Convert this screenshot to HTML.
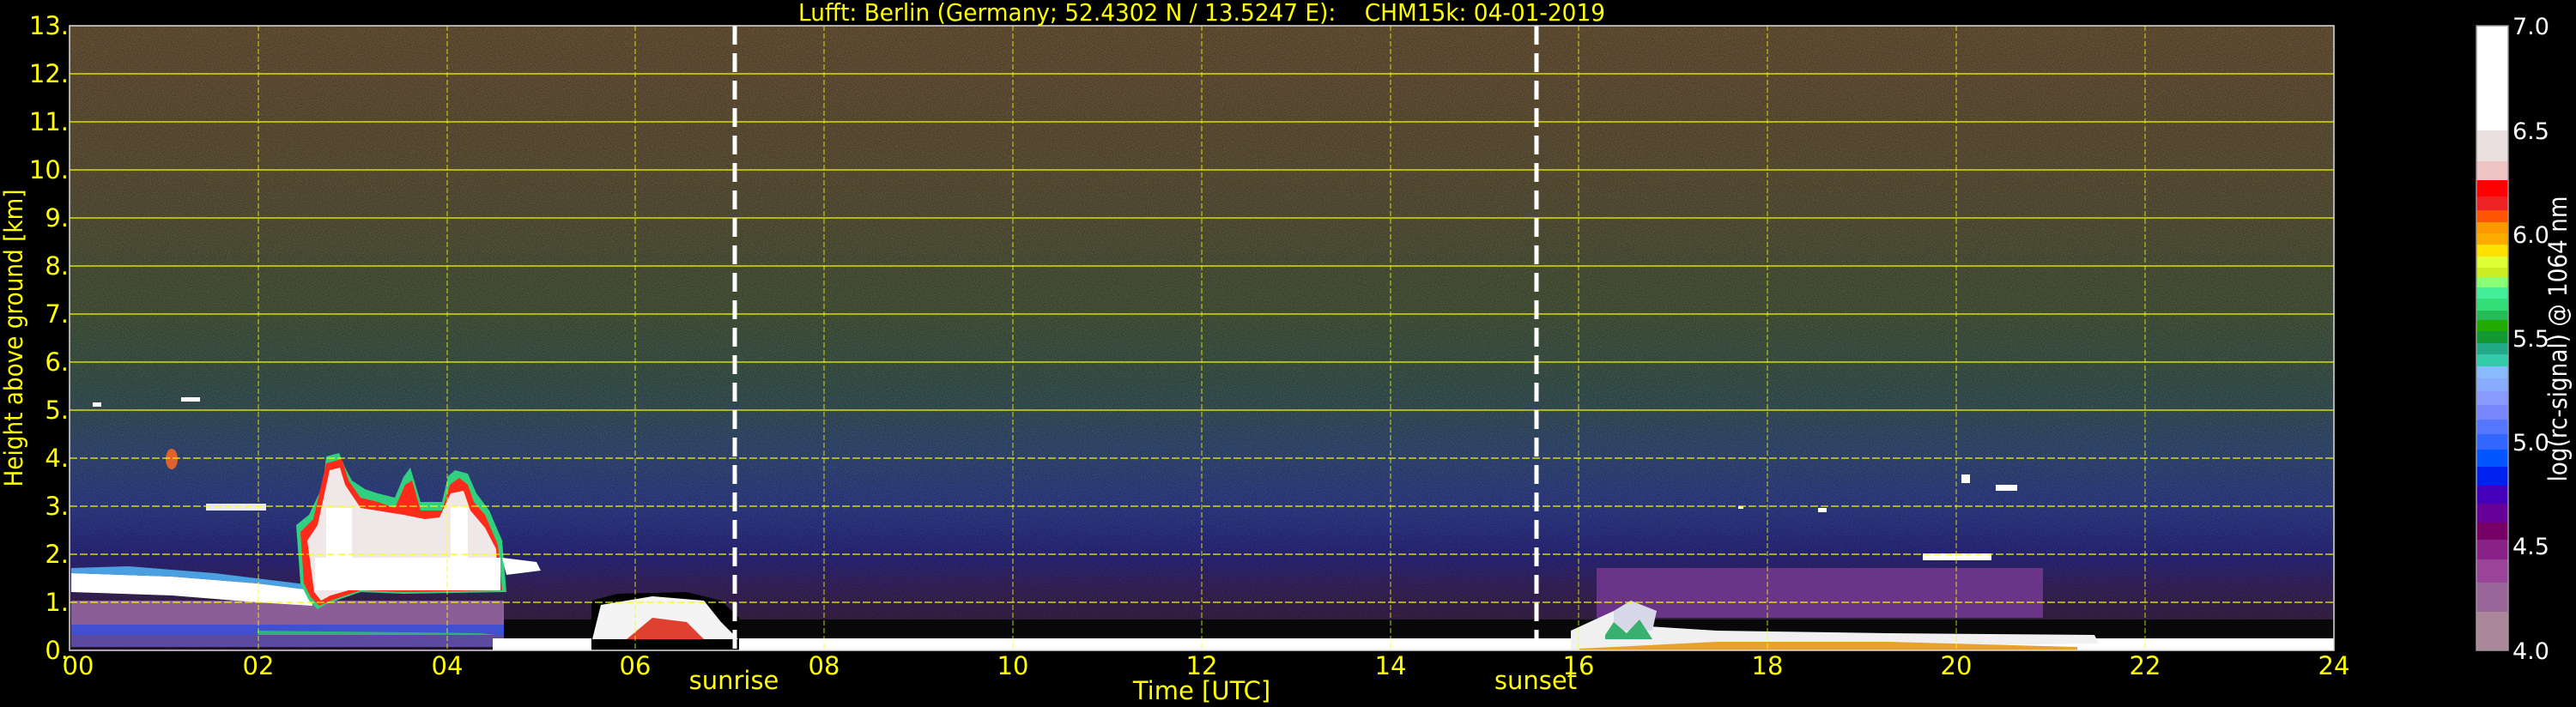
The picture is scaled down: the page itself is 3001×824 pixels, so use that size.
<!DOCTYPE html>
<html><head><meta charset="utf-8"><style>
html,body{margin:0;padding:0;background:#000;width:3001px;height:824px;overflow:hidden}
svg{display:block}
text{font-family:"DejaVu Sans","Liberation Sans",sans-serif;fill:#ffff00}
</style></head><body>
<svg width="3001" height="824" viewBox="0 0 3001 824" xmlns="http://www.w3.org/2000/svg">
<defs>
<linearGradient id="bg" x1="0" y1="30" x2="0" y2="758" gradientUnits="userSpaceOnUse">
<stop offset="0" stop-color="#6a5438"/>
<stop offset="0.25" stop-color="#5f5339"/>
<stop offset="0.45" stop-color="#4a583c"/>
<stop offset="0.58" stop-color="#3b5650"/>
<stop offset="0.68" stop-color="#364d78"/>
<stop offset="0.77" stop-color="#313f8c"/>
<stop offset="0.85" stop-color="#2c2880"/>
<stop offset="0.9" stop-color="#3a2460"/>
<stop offset="0.95" stop-color="#3a2248"/>
<stop offset="1" stop-color="#2a1830"/>
</linearGradient>
<filter id="nz" x="0" y="0" width="1" height="1">
<feTurbulence type="fractalNoise" baseFrequency="0.9" numOctaves="1" seed="3"/>
<feColorMatrix type="matrix" values="0 0 0 0 0  0 0 0 0 0  0 0 0 0 0  0 0 0 -1.6 1.1"/>
</filter>
</defs>
<rect x="81" y="30" width="2638" height="728" fill="url(#bg)"/>
<rect x="81" y="30" width="2638" height="728" filter="url(#nz)" opacity="0.45"/>

<!-- left purple band -->
<rect x="83" y="700" width="504" height="32" fill="#8a5f98"/>
<rect x="83" y="728" width="504" height="12" fill="#4050d0"/>
<path d="M300 735 L560 738 L620 745 L590 752 L300 750 Z" fill="#30b080"/>
<rect x="83" y="740" width="504" height="14" fill="#5a4aa0"/>
<path d="M83 668 L200 672 L300 680 L364 688 L364 706 L300 702 L200 694 L83 690 Z" fill="#ffffff"/>
<path d="M83 662 L83 668 L200 672 L300 680 L364 688 L364 682 L250 668 L150 660 Z" fill="#4aa0e0"/>
<!-- main cloud -->
<path d="M345 612 L360 600 L376 566 L380 532 L395 528 L402 545 L410 560 L425 570 L440 575 L460 580 L470 556 L478 545 L490 585 L515 585 L522 555 L530 548 L545 552 L555 575 L570 595 L585 630 L590 690 L470 692 L420 690 L380 704 L370 710 L360 700 L350 680 Z" fill="#30d080"/>
<path d="M350 620 L365 605 L380 540 L398 535 L406 560 L420 580 L440 585 L460 592 L472 565 L480 560 L490 595 L515 595 L524 565 L535 557 L545 565 L552 585 L565 600 L580 635 L585 688 L470 690 L420 688 L385 700 L372 706 L362 696 L354 680 Z" fill="#ff2a1a"/>
<path d="M358 630 L370 612 L384 548 L396 545 L402 565 L420 592 L470 600 L495 605 L512 603 L525 575 L540 572 L548 595 L565 615 L578 640 L580 684 L470 686 L420 684 L385 694 L374 700 L366 690 Z" fill="#f0e8e8"/>
<rect x="367" y="650" width="216" height="38" fill="#ffffff"/>
<rect x="380" y="592" width="30" height="60" fill="#ffffff"/>
<rect x="525" y="590" width="20" height="60" fill="#ffffff"/>
<path d="M585 650 L625 655 L630 665 L590 670 Z" fill="#ffffff"/>
<rect x="211" y="463" width="22" height="5" fill="#ffffff"/>
<rect x="108" y="469" width="10" height="5" fill="#ffffff"/>
<rect x="240" y="587" width="70" height="8" fill="#e8e8ff"/>
<ellipse cx="200" cy="535" rx="7" ry="12" fill="#e06030"/>

<!-- black gap band + white ground strip -->
<rect x="587" y="722" width="2132" height="22" fill="#080808"/>
<rect x="574" y="744" width="2145" height="14" fill="#ffffff"/>
<path d="M689 758 L689 700 L720 692 L800 690 L840 700 L861 720 L861 758 Z" fill="#000"/>
<path d="M690 745 L700 705 L760 695 L820 700 L840 725 L860 745 Z" fill="#f4f4f4"/>
<path d="M730 745 L760 720 L800 725 L820 745 Z" fill="#e04030"/>
<!-- right purple band -->
<rect x="1860" y="662" width="520" height="58" fill="#6a3488"/>
<path d="M1830 758 L1830 735 L1880 712 L1920 730 L2000 735 L2200 738 L2440 740 L2445 750 L1830 758 Z" fill="#f0f0f0"/>
<path d="M1880 712 L1900 700 L1930 712 L1925 735 L1880 735 Z" fill="#d8d8e8"/>
<path d="M1840 756 L2000 748 L2200 748 L2420 754 L2420 758 L1840 758 Z" fill="#e8a030"/>
<path d="M1870 740 L1880 725 L1895 738 L1910 722 L1925 745 L1870 745 Z" fill="#3ab070"/>
<rect x="2285" y="553" width="10" height="10" fill="#ffffff"/>
<rect x="2325" y="565" width="25" height="7" fill="#ffffff"/>
<rect x="2240" y="645" width="80" height="8" fill="#ffffff"/>
<rect x="2118" y="592" width="10" height="5" fill="#ffffff"/>
<rect x="2025" y="590" width="6" height="3" fill="#ffffff"/>

<g stroke="#ffff00" stroke-width="1.5" opacity="0.8">
<line x1="81" x2="2719" y1="86" y2="86"/><line x1="81" x2="2719" y1="142" y2="142"/>
<line x1="81" x2="2719" y1="198" y2="198"/><line x1="81" x2="2719" y1="254" y2="254"/>
<line x1="81" x2="2719" y1="310" y2="310"/><line x1="81" x2="2719" y1="366" y2="366"/>
<line x1="81" x2="2719" y1="422" y2="422"/><line x1="81" x2="2719" y1="478" y2="478"/>
</g>
<g stroke="#ffff00" stroke-width="1.5" stroke-dasharray="9,3" opacity="0.8">
<line x1="81" x2="2719" y1="534" y2="534"/><line x1="81" x2="2719" y1="590" y2="590"/>
<line x1="81" x2="2719" y1="646" y2="646"/><line x1="81" x2="2719" y1="702" y2="702"/>
</g>
<g stroke="#ffff00" stroke-width="1" stroke-dasharray="6,3" opacity="0.8">
<line x1="301" x2="301" y1="30" y2="758"/><line x1="521" x2="521" y1="30" y2="758"/>
<line x1="740" x2="740" y1="30" y2="758"/><line x1="960" x2="960" y1="30" y2="758"/>
<line x1="1180" x2="1180" y1="30" y2="758"/><line x1="1400" x2="1400" y1="30" y2="758"/>
<line x1="1620" x2="1620" y1="30" y2="758"/><line x1="1839" x2="1839" y1="30" y2="758"/>
<line x1="2059" x2="2059" y1="30" y2="758"/><line x1="2279" x2="2279" y1="30" y2="758"/>
<line x1="2499" x2="2499" y1="30" y2="758"/>
</g>
<g stroke="#ffffff" stroke-width="5" stroke-dasharray="22,10">
<line x1="856" x2="856" y1="30" y2="758"/>
<line x1="1790" x2="1790" y1="30" y2="758"/>
</g>
<rect x="81" y="30" width="2638" height="728" fill="none" stroke="#dddddd" stroke-width="1.5"/>

<text x="1400" y="24" font-size="28" text-anchor="middle" textLength="940" lengthAdjust="spacingAndGlyphs" xml:space="preserve">Lufft: Berlin (Germany; 52.4302 N / 13.5247 E):    CHM15k: 04-01-2019</text>
<g font-size="29" text-anchor="end">
<text x="80" y="768">0.</text><text x="80" y="712">1.</text><text x="80" y="656">2.</text>
<text x="80" y="600">3.</text><text x="80" y="544">4.</text><text x="80" y="488">5.</text>
<text x="80" y="432">6.</text><text x="80" y="376">7.</text><text x="80" y="320">8.</text>
<text x="80" y="264">9.</text><text x="80" y="208">10.</text><text x="80" y="152">11.</text>
<text x="80" y="96">12.</text><text x="80" y="40">13.</text>
</g>
<text transform="translate(26,394) rotate(-90)" font-size="29" text-anchor="middle" textLength="347" lengthAdjust="spacingAndGlyphs">Height above ground [km]</text>
<g font-size="29" text-anchor="middle">
<text x="91" y="786">00</text><text x="301" y="786">02</text><text x="521" y="786">04</text>
<text x="740" y="786">06</text><text x="960" y="786">08</text><text x="1180" y="786">10</text>
<text x="1400" y="786">12</text><text x="1620" y="786">14</text><text x="1839" y="786">16</text>
<text x="2059" y="786">18</text><text x="2279" y="786">20</text><text x="2499" y="786">22</text>
<text x="2719" y="786">24</text>
</g>
<text x="855" y="803" font-size="29" text-anchor="middle">sunrise</text>
<text x="1789" y="803" font-size="29" text-anchor="middle">sunset</text>
<text x="1400" y="815" font-size="29" text-anchor="middle">Time [UTC]</text>

<g>
<rect x="2885" y="30" width="37" height="122" fill="#ffffff"/>
<rect x="2885" y="152" width="37" height="36" fill="#ebe0e0"/>
<rect x="2885" y="188" width="37" height="22" fill="#eec4c4"/>
<rect x="2885" y="210" width="37" height="19" fill="#ff0000"/>
<rect x="2885" y="229" width="37" height="16" fill="#ee2222"/>
<rect x="2885" y="245" width="37" height="14" fill="#ff5500"/>
<rect x="2885" y="259" width="37" height="13" fill="#ff9900"/>
<rect x="2885" y="272" width="37" height="13" fill="#ffaa00"/>
<rect x="2885" y="285" width="37" height="14" fill="#ffe000"/>
<rect x="2885" y="299" width="37" height="13" fill="#ddff33"/>
<rect x="2885" y="312" width="37" height="11" fill="#ccee22"/>
<rect x="2885" y="323" width="37" height="12" fill="#88ff77"/>
<rect x="2885" y="335" width="37" height="13" fill="#44ee99"/>
<rect x="2885" y="348" width="37" height="14" fill="#33dd77"/>
<rect x="2885" y="362" width="37" height="11" fill="#22bb55"/>
<rect x="2885" y="373" width="37" height="13" fill="#22aa00"/>
<rect x="2885" y="386" width="37" height="14" fill="#119933"/>
<rect x="2885" y="400" width="37" height="13" fill="#22aa88"/>
<rect x="2885" y="413" width="37" height="14" fill="#33ccaa"/>
<rect x="2885" y="427" width="37" height="14" fill="#88bbff"/>
<rect x="2885" y="441" width="37" height="15" fill="#88aaff"/>
<rect x="2885" y="456" width="37" height="16" fill="#8899ff"/>
<rect x="2885" y="472" width="37" height="17" fill="#7788ff"/>
<rect x="2885" y="489" width="37" height="17" fill="#5577ff"/>
<rect x="2885" y="506" width="37" height="18" fill="#3366ff"/>
<rect x="2885" y="524" width="37" height="20" fill="#0055ff"/>
<rect x="2885" y="544" width="37" height="22" fill="#0022ee"/>
<rect x="2885" y="566" width="37" height="21" fill="#4400bb"/>
<rect x="2885" y="587" width="37" height="22" fill="#660099"/>
<rect x="2885" y="609" width="37" height="20" fill="#770066"/>
<rect x="2885" y="629" width="37" height="23" fill="#882288"/>
<rect x="2885" y="652" width="37" height="27" fill="#994499"/>
<rect x="2885" y="679" width="37" height="34" fill="#996699"/>
<rect x="2885" y="713" width="37" height="45" fill="#aa8899"/>
<rect x="2885" y="30" width="37" height="728" fill="none" stroke="#999" stroke-width="1.5"/>
</g>
<g font-size="27">
<text x="2927" y="40" style="fill:#fff">7.0</text>
<text x="2927" y="162" style="fill:#fff">6.5</text>
<text x="2927" y="283" style="fill:#fff">6.0</text>
<text x="2927" y="404" style="fill:#fff">5.5</text>
<text x="2927" y="525" style="fill:#fff">5.0</text>
<text x="2927" y="646" style="fill:#fff">4.5</text>
<text x="2927" y="768" style="fill:#fff">4.0</text>
</g>
<text transform="translate(2990,395) rotate(-90)" font-size="29" text-anchor="middle" style="fill:#fff" textLength="333" lengthAdjust="spacingAndGlyphs">log(rc-signal) @ 1064 nm</text>
</svg>
</body></html>
